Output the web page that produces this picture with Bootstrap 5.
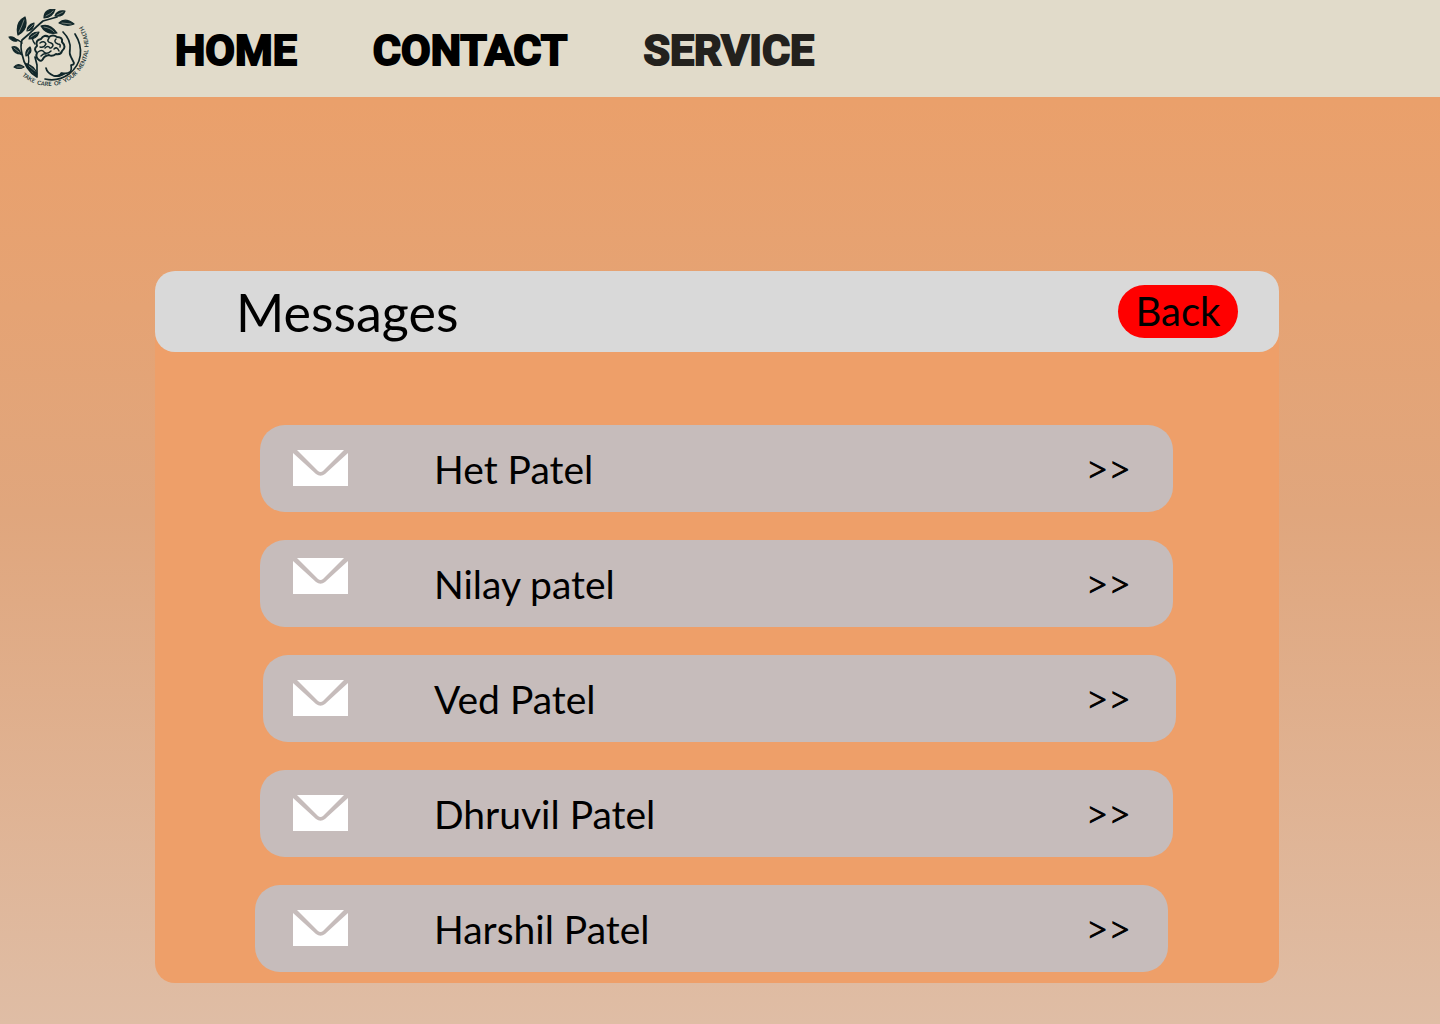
<!DOCTYPE html>
<html lang="en">
<head>
<meta charset="utf-8">
<meta name="viewport" content="width=device-width, initial-scale=1">
<title>Messages</title>
<link href="https://cdn.jsdelivr.net/npm/bootstrap@5.3.0/dist/css/bootstrap.min.css" rel="stylesheet">
<style>
  body {
    min-height: 100vh;
    font-family: Lato, "Open Sans", sans-serif;
    color: #000;
    background: linear-gradient(180deg, #eaa06b 10%, #e0a67d 50%, #dfbda5 100%) no-repeat;
  }
  .site-bar { background: #e1dbca; height: 97px; padding: 0 8px; }
  .site-links { gap: 76px; margin-left: 86px; }
  .site-links .nav-link {
    font-family: Roboto, sans-serif;
    font-weight: 700; font-size: 43px; line-height: 58px;
    color: #000; padding: 2px 0 0;
    -webkit-text-stroke: 2px currentColor;
  }
  .site-links .nav-link.current { color: #23211d; }
  .board { margin: 174px 161px 41px 155px; background: #ee9f69; border-radius: 20px; }
  .board-head { background: #d9d9d9; border-radius: 20px; height: 81px; padding: 0 41px 0 81px; }
  .board-head h1 { font-size: 52px; line-height: 60px; font-weight: 400; }
  .back-btn {
    background: #f00; color: #000; border: 0; border-radius: 27px;
    width: 120px; height: 53px; padding: 0; font-size: 40px; line-height: 53px;
  }
  .inbox { padding: 73px 106px 11px 105px; gap: 28px; }
  .inbox-item {
    --shift: 0px;
    height: 87px; border-radius: 25px; background: #c6bcbb; color: #000;
    margin-left: var(--shift); margin-right: calc(0px - var(--shift));
    padding-left: calc(33px - var(--shift)); padding-right: calc(42px + var(--shift));
    font-size: 39px; line-height: 48px;
  }
  .shift-right { --shift: 3px; }
  .shift-left { --shift: -5px; }
  .envelope { width: 55px; height: 36px; margin: 0 86px 2px 0; }
  .envelope.raised { margin-bottom: 16px; }
  .chevrons { font-weight: 300; padding-bottom: 2px; -webkit-text-stroke: 1px currentColor; }
</style>
</head>
<body>
<svg class="d-none" xmlns="http://www.w3.org/2000/svg">
  <symbol id="mail" viewBox="0 0 55 36">
    <path fill="#fff" d="M4 0H51L30 21Q27.500 23 25 21ZM0 3 23 24Q27.500 27.500 32 24L55 3V36H0Z"/>
  </symbol>
</svg>
<header class="site-bar d-flex align-items-center">
  <a href="#" aria-label="Mental health home" class="d-flex">
    <svg width="81" height="80" viewBox="8 8 81 80" fill="none" stroke="#11272a" stroke-linecap="round" stroke-linejoin="round">
      <path id="ring" stroke="none" d="M22 74.500A39.500 39.500 0 0 0 79 20"/>
      <text font-family="Lato, sans-serif" font-weight="700" font-size="5.800" fill="#26383a" stroke="none"><textPath href="#ring">TAKE&nbsp;&nbsp;CARE&nbsp;&nbsp;OF&nbsp;&nbsp;YOUR&nbsp;&nbsp;MENTAL&nbsp;&nbsp;HEALTH</textPath></text>
      <g stroke-width="1.700">
        <path d="M75 33C84 47 82 63 69 73Q58 81 45 78"/>
        <path d="M63 31Q71 39 70 48Q69 53 71 56L74 62Q74 64 71 64Q72 69 70 71Q67 73 62 72Q60 76 54 75Q47 72 46 67"/>
        <path d="M37 76V64Q36 60 35 56M37 75L27 63M37 76Q25 69 22 53Q20 45 22 39L29 33Q37 25 43 20L57 16M22 42Q18 38 13 38M22 54Q18 50 15 48"/>
        <path stroke-width="1.400" d="M33 33Q31 38 35 43M28 64Q30 58 27 50"/>
      </g>
      <path fill="#11272a" stroke="none" d="M52 74Q58 79 67 72Q62 73 61 71Q59 75 52 74Z"/>
      <g stroke-width="2">
        <path d="M39 59Q35 56 37 52Q33 48 37 45Q35 39 41 38Q44 33 49 36Q53 33 57 36Q63 36 62 41Q67 46 62 50Q61 54 56 53Q52 56 49 54Q44 55 43 58Q41 61 39 59Z"/>
        <path stroke-width="1.500" d="M40 42Q44 39 46 43Q44 47 40 46M49 37Q46 41 51 42Q55 44 51 47M56 38Q53 41 58 43Q61 43 60 46M38 51Q42 48 44 51Q47 54 51 50M54 48Q57 45 59 50M45 47Q48 44 50 47M41 55Q44 52 46 53"/>
      </g>
      <g fill="#11272a" stroke="#11272a" stroke-width="1.200">
        <path d="M44 17Q44 8 55 8Q53 16 44 17ZM55 15Q57 9 65 10Q63 16 55 15ZM59 22Q65 16 74 23Q67 26 59 22ZM41 25Q50 22 57 32Q46 34 41 25ZM18 34Q15 21 25 16Q29 28 18 34ZM27 30Q27 24 34 22Q34 29 27 30ZM29 38Q30 31 39 31Q37 38 29 38ZM9 36Q14 35 17 40Q12 41 9 36ZM12 46Q18 44 21 53Q14 53 12 46ZM26 55Q25 49 30 46Q33 52 26 55ZM14 66Q18 61 24 66Q19 69 14 66ZM26 63Q34 64 37 73Q29 70 26 63Z"/>
        <path fill="none" stroke="#b9bbad" stroke-width=".6" d="M46 15Q51 13 53 10M57 14L63 11M62 22L71 23M44 26Q51 27 54 31M19 31Q22 25 24 19M28 29L33 24M31 36L37 32M14 47L19 51M27 53L29 49M17 66L22 66M29 65L35 70"/>
      </g>
    </svg>
  </a>
  <nav class="site-links nav flex-nowrap">
    <a class="nav-link" href="#">HOME</a>
    <a class="nav-link" href="#">CONTACT</a>
    <a class="nav-link current" href="#">SERVICE</a>
  </nav>
</header>
<main class="board">
  <div class="board-head d-flex align-items-center justify-content-between">
    <h1 class="m-0">Messages</h1>
    <button type="button" class="back-btn">Back</button>
  </div>
  <div class="inbox d-flex flex-column">
    <a href="#" class="inbox-item d-flex align-items-center text-decoration-none"><svg class="envelope"><use href="#mail"/></svg><span>Het Patel</span><span class="chevrons ms-auto">&gt;&gt;</span></a>
    <a href="#" class="inbox-item d-flex align-items-center text-decoration-none"><svg class="envelope raised"><use href="#mail"/></svg><span>Nilay patel</span><span class="chevrons ms-auto">&gt;&gt;</span></a>
    <a href="#" class="inbox-item shift-right d-flex align-items-center text-decoration-none"><svg class="envelope"><use href="#mail"/></svg><span>Ved Patel</span><span class="chevrons ms-auto">&gt;&gt;</span></a>
    <a href="#" class="inbox-item d-flex align-items-center text-decoration-none"><svg class="envelope"><use href="#mail"/></svg><span>Dhruvil Patel</span><span class="chevrons ms-auto">&gt;&gt;</span></a>
    <a href="#" class="inbox-item shift-left d-flex align-items-center text-decoration-none"><svg class="envelope"><use href="#mail"/></svg><span>Harshil Patel</span><span class="chevrons ms-auto">&gt;&gt;</span></a>
  </div>
</main>
<script src="https://cdn.jsdelivr.net/npm/bootstrap@5.3.0/dist/js/bootstrap.bundle.min.js"></script>
</body>
</html>
